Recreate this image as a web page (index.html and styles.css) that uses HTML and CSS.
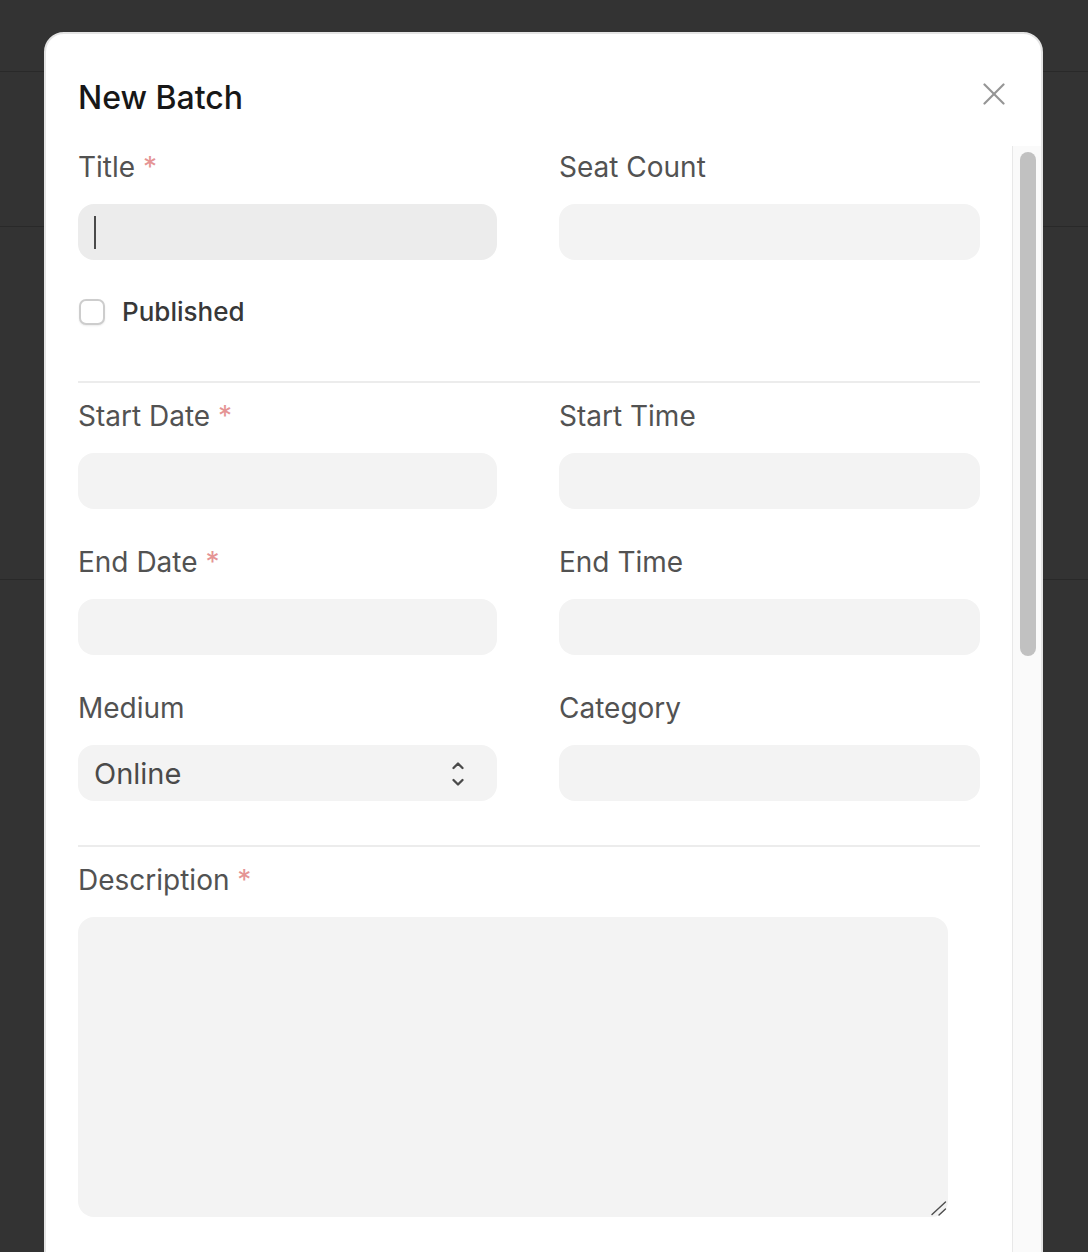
FILE: index.html
```html
<!DOCTYPE html>
<html lang="en">
<head>
<meta charset="utf-8">
<title>New Batch</title>
<link rel="stylesheet" href="styles.css">
</head>
<body>
<div class="backdrop">
  <div class="bg-header"></div>
  <div class="bg-row bg-row-1"></div>
  <div class="bg-row bg-row-2"></div>
</div>

<div class="modal">
  <div class="modal-header">
    <h1 class="modal-title">New Batch</h1>
    <button class="close-btn" aria-label="Close">
      <svg width="22" height="22" viewBox="0 0 22 22" fill="none" stroke="#959595" stroke-width="2.2" stroke-linecap="round">
        <line x1="1.5" y1="1.5" x2="20.5" y2="20.5"/>
        <line x1="20.5" y1="1.5" x2="1.5" y2="20.5"/>
      </svg>
    </button>
  </div>

  <div class="modal-body">
    <div class="form">
      <div class="grid">
        <div class="field">
          <label class="label">Title <span class="req">*</span></label>
          <div class="input-wrap">
            <input class="input input-focus" type="text">
            <span class="caret"></span>
          </div>
        </div>
        <div class="field">
          <label class="label">Seat Count</label>
          <input class="input" type="text">
        </div>
      </div>

      <div class="check-row">
        <input class="checkbox" type="checkbox">
        <span class="check-label">Published</span>
      </div>

      <div class="divider divider-1"></div>

      <div class="grid grid-rows">
        <div class="field">
          <label class="label">Start Date <span class="req">*</span></label>
          <input class="input" type="text">
        </div>
        <div class="field">
          <label class="label">Start Time</label>
          <input class="input" type="text">
        </div>
        <div class="field">
          <label class="label">End Date <span class="req">*</span></label>
          <input class="input" type="text">
        </div>
        <div class="field">
          <label class="label">End Time</label>
          <input class="input" type="text">
        </div>
        <div class="field">
          <label class="label">Medium</label>
          <div class="select-wrap">
            <select class="input select">
              <option>Online</option>
              <option>Offline</option>
            </select>
            <svg class="chevrons" width="12" height="24" viewBox="0 0 12 24" fill="none" stroke="#4a4a4a" stroke-width="2.3" stroke-linecap="round" stroke-linejoin="round">
              <polyline points="1.5,6 6,1.5 10.5,6"/>
              <polyline points="1.5,18 6,22.5 10.5,18"/>
            </svg>
          </div>
        </div>
        <div class="field">
          <label class="label">Category</label>
          <input class="input" type="text">
        </div>
      </div>

      <div class="divider divider-2"></div>

      <div class="field field-desc">
        <label class="label">Description <span class="req">*</span></label>
        <div class="textarea-wrap">
          <textarea class="textarea"></textarea>
          <svg class="resizer" width="16" height="16" viewBox="0 0 16 16" fill="none" stroke="#4d4d4d" stroke-width="1.4" stroke-linecap="round">
            <line x1="1" y1="14.5" x2="14.5" y2="2"/>
            <line x1="8" y1="15" x2="14.5" y2="9"/>
          </svg>
        </div>
      </div>
    </div>

    <div class="scrollbar">
      <div class="scroll-thumb"></div>
    </div>
  </div>
</div>
</body>
</html>
```
FILE: styles.css
```css
* {
  box-sizing: border-box;
}

html, body {
  margin: 0;
  height: 100%;
}

body {
  background: #333333;
  font-family: Inter, "Noto Sans", "Liberation Sans", sans-serif;
  overflow: hidden;
  position: relative;
}

/* dimmed page behind the dialog */
.backdrop {
  display: flex;
  flex-direction: column;
}

.bg-header {
  height: 72px;
  border-bottom: 1px solid #292929;
}

.bg-row {
  border-bottom: 1px solid #292929;
}

.bg-row-1 {
  height: 155px;
}

.bg-row-2 {
  height: 353px;
}

/* dialog */
.modal {
  position: absolute;
  left: 44px;
  top: 32px;
  width: 999px;
  height: 1300px;
  background: #ffffff;
  border: 2px solid #e4e4e4;
  border-radius: 20px;
  display: flex;
  flex-direction: column;
  overflow: hidden;
}

.modal-header {
  flex: none;
  height: 112px;
  padding: 44px 36px 0 32px;
  display: flex;
  justify-content: space-between;
  align-items: flex-start;
}

.modal-title {
  margin: 0;
  font-size: 32px;
  line-height: 40px;
  font-weight: 500;
  color: #171717;
}

.close-btn {
  margin-top: 5px;
  padding: 0;
  border: 0;
  background: none;
  width: 22px;
  height: 22px;
  display: block;
}

.close-btn svg {
  display: block;
}

.modal-body {
  flex: none;
  height: 1106px;
  display: flex;
  overflow: hidden;
}

.form {
  flex: 1;
  min-width: 0;
  padding: 3px 32px 0 32px;
}

/* scrollbar of the dialog body */
.scrollbar {
  flex: none;
  width: 29px;
  background: #fafafa;
  border-left: 1px solid #e8e8e8;
  padding: 6px 4px 0 7px;
}

.scroll-thumb {
  width: 16px;
  height: 504px;
  border-radius: 8px;
  background: #c1c1c1;
}

.grid {
  display: grid;
  grid-template-columns: 419px 421px;
  column-gap: 62px;
}

.grid-rows {
  row-gap: 35px;
}

.field {
  display: flex;
  flex-direction: column;
}

.label {
  font-size: 28px;
  line-height: 36px;
  color: #525252;
  margin-bottom: 19px;
}

.req {
  color: #e59494;
}

.input-wrap,
.select-wrap,
.textarea-wrap {
  position: relative;
}

.input {
  width: 100%;
  height: 56px;
  border: 0;
  border-radius: 16px;
  background: #f3f3f3;
  font-family: inherit;
  font-size: 28px;
  color: #333;
  padding: 0 16px;
  outline: none;
  display: block;
}

.input-focus {
  background: #ececec;
}

.caret {
  position: absolute;
  left: 16px;
  top: 12px;
  width: 2px;
  height: 33px;
  background: #4a4a4a;
}

.select {
  -webkit-appearance: none;
  appearance: none;
  color: #4a4a4a;
  font-size: 29px;
  padding-left: 16px;
}

.chevrons {
  position: absolute;
  right: 33px;
  top: 17px;
  pointer-events: none;
}

.check-row {
  display: flex;
  align-items: center;
  gap: 17px;
  margin-top: 39px;
  height: 26px;
}

.checkbox {
  -webkit-appearance: none;
  appearance: none;
  margin: 0 0 0 1px;
  width: 26px;
  height: 26px;
  border: 2px solid #cdcdcd;
  border-radius: 7px;
  background: #fff;
  box-shadow: 0 1px 2px rgba(0, 0, 0, 0.08);
}

.check-label {
  font-size: 26px;
  line-height: 36px;
  font-weight: 500;
  color: #383838;
}

.divider {
  height: 2px;
  background: #ececec;
}

.divider-1 {
  margin-top: 56px;
  margin-bottom: 15px;
}

.divider-2 {
  margin-top: 44px;
  margin-bottom: 15px;
}

.textarea-wrap {
  width: 870px;
}

.textarea {
  display: block;
  width: 870px;
  height: 300px;
  border: 0;
  border-radius: 16px;
  background: #f3f3f3;
  font-family: inherit;
  font-size: 28px;
  padding: 12px 16px;
  outline: none;
  resize: none;
}

.resizer {
  position: absolute;
  right: 1px;
  bottom: 1px;
  pointer-events: none;
}
```
